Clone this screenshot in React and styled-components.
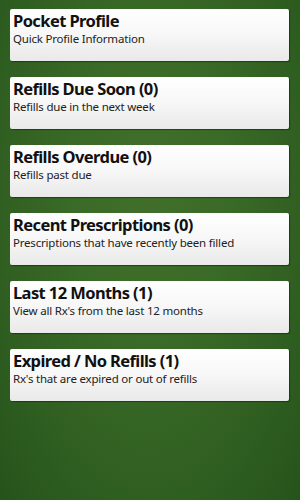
import React from "react";
import styled, { createGlobalStyle } from "styled-components";

const Global = createGlobalStyle`
  html, body { margin: 0; padding: 0; height: 100%; }
  body {
    font-family: "Noto Sans", "Open Sans", sans-serif;
  }
  #root { height: 100%; }
`;

const Screen = styled.div`
  width: 300px;
  height: 500px;
  box-sizing: border-box;
  padding: 9px 11px 0 10px;
  background: radial-gradient(ellipse 75% 90% at 50% 38%, #416f2b 0%, #3a6a27 35%, #2f5e21 70%, #245119 100%);
  display: flex;
  flex-direction: column;
  gap: 16px;
  overflow: hidden;
`;

const Card = styled.div`
  height: 52px;
  box-sizing: border-box;
  border-radius: 2px;
  background: linear-gradient(#ffffff 0%, #f7f7f7 50%, #e9e9e9 100%);
  box-shadow: 1px 1px 1px rgba(0, 40, 0, 0.55);
  padding: 1px 3px 0 3px;
  display: flex;
  flex-direction: column;
`;

const Title = styled.div`
  font-weight: 700;
  font-size: 16.5px;
  letter-spacing: -0.6px;
  line-height: 21px;
  color: #111;
  white-space: nowrap;
`;

const Sub = styled.div`
  font-size: 11.5px;
  letter-spacing: -0.2px;
  line-height: 15px;
  color: #222;
  white-space: nowrap;
`;

const items = [
  ["Pocket Profile", "Quick Profile Information"],
  ["Refills Due Soon (0)", "Refills due in the next week"],
  ["Refills Overdue (0)", "Refills past due"],
  ["Recent Prescriptions (0)", "Prescriptions that have recently been filled"],
  ["Last 12 Months (1)", "View all Rx's from the last 12 months"],
  ["Expired / No Refills (1)", "Rx's that are expired or out of refills"],
];

export default function App() {
  return (
    <>
      <Global />
      <Screen>
        {items.map(([t, s]) => (
          <Card key={t}>
            <Title>{t}</Title>
            <Sub>{s}</Sub>
          </Card>
        ))}
      </Screen>
    </>
  );
}
